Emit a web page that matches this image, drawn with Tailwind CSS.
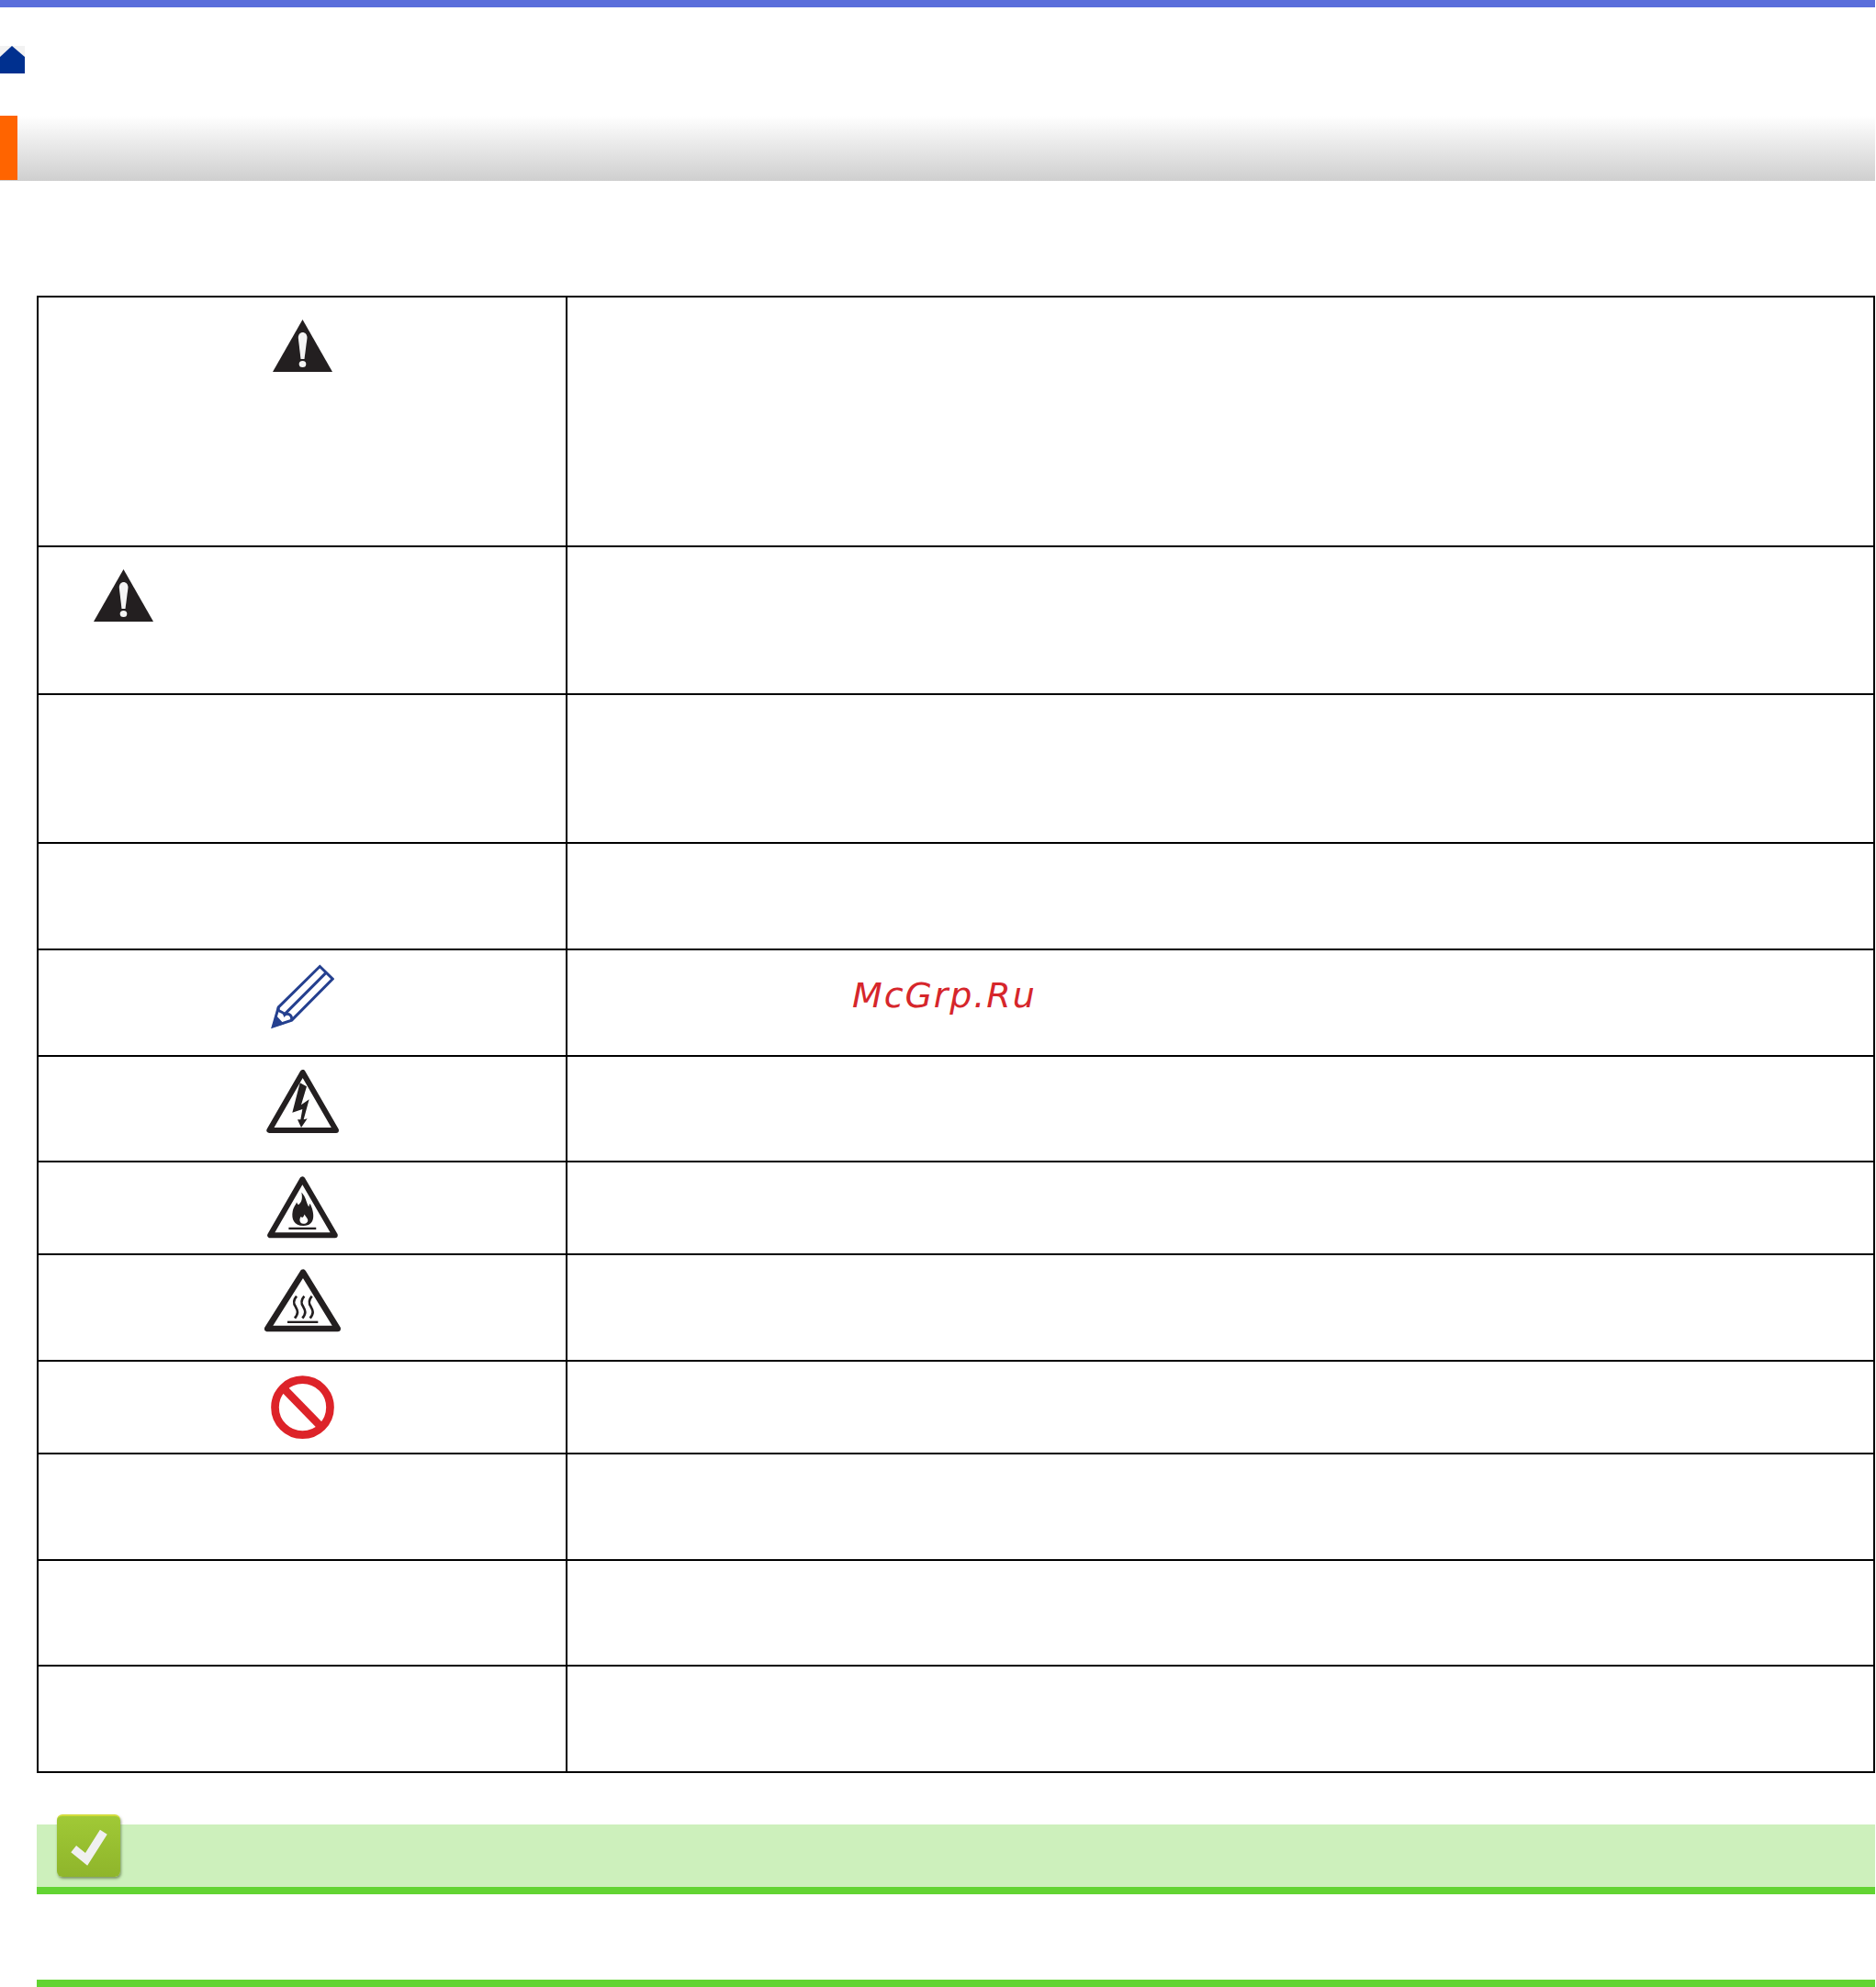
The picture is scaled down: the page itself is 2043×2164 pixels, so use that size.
<!DOCTYPE html>
<html lang="ru">
<head>
    <meta charset="UTF-8">
    <title>McGrp.Ru</title>
    <script src="https://cdn.jsdelivr.net/npm/@tailwindcss/browser@4"></script>
</head>
<body class="bg-white font-['DejaVu_Sans',sans-serif] w-[2042px] h-[2164px] overflow-hidden">
    <!-- top bar -->
    <div class="w-[2043px] h-2 bg-[#5a6edb]"></div>

    <!-- home link -->
    <a href="#" class="block mt-[42px] w-[27px] h-[30px] bg-[#f2f2f2]">
        <svg class="block w-[27px] h-[30px]" viewBox="0 0 27 30"><polygon fill="#00308f" points="13,0 27,12 27,30 0,30 0,12"/></svg>
    </a>

    <!-- heading -->
    <div class="flex mt-[46px] h-[71px] bg-gradient-to-b from-white to-[#cfcfcf]">
        <div class="w-[19px] h-[70px] bg-[#ff6400]"></div>
    </div>

    <!-- table -->
    <div class="ml-[40px] mt-[125px] w-[2002px] border-t-2 border-x-2 border-black">
        <div class="grid grid-cols-[576px_1fr] h-[272px] border-b-2 border-black">
            <div class="flex justify-center pt-6 border-r-2 border-black">
                <svg class="w-[65px] h-[57px]" viewBox="0 0 65 57"><polygon fill="#231f20" points="32.5,0 65,57 0,57"/><path fill="#f4f4f4" d="M27.8 20C27.8 12 37.5 12 37.5 20L34.5 43H30.5Z"/><ellipse fill="#f4f4f4" cx="32.5" cy="48.5" rx="3.8" ry="3.5"/></svg>
            </div>
            <div></div>
        </div>
        <div class="grid grid-cols-[576px_1fr] h-[161px] border-b-2 border-black">
            <div class="flex pl-[60px] pt-6 border-r-2 border-black">
                <svg class="w-[65px] h-[57px]" viewBox="0 0 65 57"><polygon fill="#231f20" points="32.5,0 65,57 0,57"/><path fill="#f4f4f4" d="M27.8 20C27.8 12 37.5 12 37.5 20L34.5 43H30.5Z"/><ellipse fill="#f4f4f4" cx="32.5" cy="48.5" rx="3.8" ry="3.5"/></svg>
            </div>
            <div></div>
        </div>
        <div class="grid grid-cols-[576px_1fr] h-[162px] border-b-2 border-black">
            <div class="border-r-2 border-black"></div>
            <div></div>
        </div>
        <div class="grid grid-cols-[576px_1fr] h-[116px] border-b-2 border-black">
            <div class="border-r-2 border-black"></div>
            <div></div>
        </div>
        <div class="grid grid-cols-[576px_1fr] h-[116px] border-b-2 border-black">
            <div class="flex justify-center pt-[15px] border-r-2 border-black">
                <svg class="w-[70px] h-[71px]" viewBox="72 55 210 212" fill="none" stroke="#25408f" stroke-width="9"><path d="M235 62L277 103L143 238L82 258L100 195Z"/><path d="M256 82L122 216"/><path d="M100 195C95 215 115 205 120 220C125 215 145 215 143 238"/><polygon fill="#25408f" stroke="none" points="77,262 92,222 118,250"/></svg>
            </div>
            <div class="pl-[310px] pt-[27px]"><span class="italic text-[38px] leading-[44px] tracking-[1.9px] text-[#d6262b]">McGrp.Ru</span></div>
        </div>
        <div class="grid grid-cols-[576px_1fr] h-[115px] border-b-2 border-black">
            <div class="flex justify-center pt-[14px] border-r-2 border-black">
                <svg class="w-[79px] h-[69px]" viewBox="58 45 237 207"><path fill="#fff" stroke="#231f20" stroke-width="18" stroke-linejoin="round" d="M177 54L68 243H286Z"/><polygon fill="#231f20" points="168,88 190,100 172,160 198,142 180,208 192,205 172,234 160,208 170,208 176,174 143,185"/></svg>
            </div>
            <div></div>
        </div>
        <div class="grid grid-cols-[576px_1fr] h-[101px] border-b-2 border-black">
            <div class="flex justify-center pt-[15px] border-r-2 border-black">
                <svg class="w-[77px] h-[68px]" viewBox="62 35 231 205"><path fill="#fff" stroke="#231f20" stroke-width="18" stroke-linejoin="round" d="M177 45L71 229H284Z"/><path fill="#231f20" d="M180 198C150 198 140 175 145 150C148 135 155 130 158 120C162 130 165 130 168 125C178 115 176 100 174 88C190 105 190 125 198 135C200 130 200 128 202 125C215 150 225 198 180 198Z"/><path fill="#fff" d="M180 191C168 191 165 178 172 168C177 174 181 168 184 160C190 172 198 176 194 184C190 191 185 191 180 191Z"/><rect fill="#231f20" x="132" y="203" width="90" height="7"/></svg>
            </div>
            <div></div>
        </div>
        <div class="grid grid-cols-[576px_1fr] h-[116px] border-b-2 border-black">
            <div class="flex justify-center pt-[15px] border-r-2 border-black">
                <svg class="w-[83px] h-[69px]" viewBox="53 37 249 205"><path fill="#fff" stroke="#231f20" stroke-width="20" stroke-linejoin="round" d="M179 47L63 231H292Z"/><g fill="none" stroke="#231f20" stroke-width="8"><path d="M158 125C145 140 148 150 155 160C162 172 165 180 152 197"/><path d="M183 125C170 140 173 150 180 160C187 172 190 180 177 197"/><path d="M208 125C195 140 198 150 205 160C212 172 215 180 202 197"/></g><rect fill="#231f20" x="128" y="206" width="100" height="7"/></svg>
            </div>
            <div></div>
        </div>
        <div class="grid grid-cols-[576px_1fr] h-[101px] border-b-2 border-black">
            <div class="flex justify-center pt-[15px] border-r-2 border-black">
                <svg class="w-[69px] h-[69px]" viewBox="75 53 206 207" fill="none" stroke="#dd2329" stroke-width="26"><circle cx="178" cy="157" r="90"/><path d="M122 101L236 218"/></svg>
            </div>
            <div></div>
        </div>
        <div class="grid grid-cols-[576px_1fr] h-[116px] border-b-2 border-black">
            <div class="border-r-2 border-black"></div>
            <div></div>
        </div>
        <div class="grid grid-cols-[576px_1fr] h-[115px] border-b-2 border-black">
            <div class="border-r-2 border-black"></div>
            <div></div>
        </div>
        <div class="grid grid-cols-[576px_1fr] h-[116px] border-b-2 border-black">
            <div class="border-r-2 border-black"></div>
            <div></div>
        </div>
    </div>

    <!-- related section -->
    <div class="relative ml-[40px] mt-[56px] h-[76px] bg-[#cdf0bc] border-b-8 border-[#62d432]">
        <div class="absolute left-[22px] top-[-11px] w-[69px] h-[68px] rounded-[6px] bg-gradient-to-b from-[#a0c936] to-[#8fb52b] border-t-2 border-[#d2dc3c] shadow-[1px_2px_3px_rgba(70,90,40,0.6)]">
            <svg class="w-[69px] h-[66px] blur-[0.5px]" viewBox="0 0 205 200" fill="none"><path stroke="#f0f0f0" stroke-width="28" d="M53 108L95 142L152 52"/></svg>
        </div>
    </div>
    <div class="ml-[40px] mt-[93px] h-2 bg-[#62d432]"></div>
</body>
</html>
